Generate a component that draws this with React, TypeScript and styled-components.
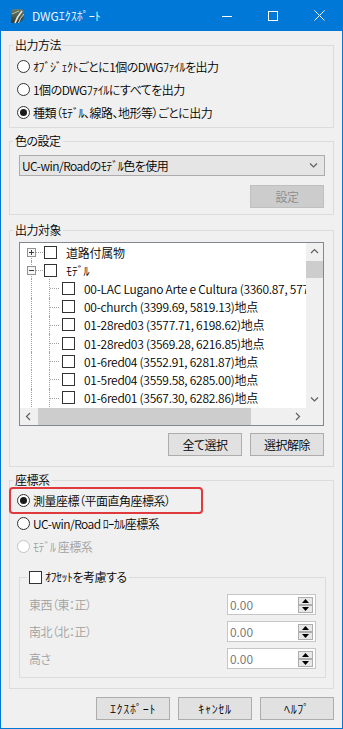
import React from 'react'
import styled, { createGlobalStyle } from 'styled-components'

const FONT = `"Noto Sans CJK JP", "Noto Sans", sans-serif`

const GlobalStyle = createGlobalStyle`
  html, body { margin: 0; padding: 0; background: #f0f0f0; }
  body {
    font-family: ${FONT};
    font-size: 12px;
    font-weight: 350;
    letter-spacing: -0.5px;
    color: #000;
    font-feature-settings: "palt";
  }
  * { box-sizing: border-box; }
`

const Window = styled.div`
  width: 343px;
  height: 729px;
  display: flex;
  flex-direction: column;
  background: #f0f0f0;
  border: 1px solid #0078d7;
  border-top: none;
`

const TitleBar = styled.div`
  display: flex;
  align-items: center;
  height: 31px;
  flex: none;
  background: #0078d7;
  color: #fff;
`

const IconSvg = styled.svg`
  margin-left: 8px;
  flex: none;
`

const Title = styled.span`
  margin-left: 6px;
  font-size: 12px;
  line-height: 16px;
  letter-spacing: 0;
`

const Captions = styled.div`
  display: flex;
  margin-left: auto;
  height: 100%;
`

const CaptionButton = styled.div`
  width: 46px;
  height: 100%;
  display: flex;
  align-items: center;
  justify-content: center;
`

const Body = styled.div`
  display: flex;
  flex-direction: column;
  padding: 7px 8px 0;
`

const Group = styled.fieldset<{ $top: number; $pad: string }>`
  margin: ${(p) => p.$top}px 0 0;
  padding: ${(p) => p.$pad};
  border: 1px solid #dcdcdc;
  min-inline-size: 0;
  display: flex;
  flex-direction: column;
`

const Legend = styled.legend`
  margin-left: -4px;
  padding: 0 2px;
  line-height: 14px;
  font-size: 12px;
`

const RadioRow = styled.div<{ $disabled?: boolean }>`
  display: flex;
  align-items: center;
  gap: 3px;
  height: 23px;
  color: ${(p) => (p.$disabled ? '#a0a0a0' : '#000')};
  white-space: nowrap;
`

const RadioDot = styled.span<{ $checked?: boolean; $disabled?: boolean }>`
  flex: none;
  width: 13px;
  height: 13px;
  border-radius: 50%;
  border: 1px solid ${(p) => (p.$disabled ? '#c4c4c4' : '#333')};
  background: #fff;
  display: flex;
  align-items: center;
  justify-content: center;
  &::after {
    content: '';
    width: 7px;
    height: 7px;
    border-radius: 50%;
    background: #1a1a1a;
    display: ${(p) => (p.$checked ? 'block' : 'none')};
  }
`

const Highlight = styled.div`
  display: flex;
  align-items: center;
  width: 194px;
  height: 27px;
  margin: -2px 0 -2px -8px;
  padding-left: 6px;
  border: 2px solid #e0393e;
  border-radius: 4px;
`

const Select = styled.div`
  display: flex;
  align-items: center;
  height: 21px;
  margin: 0 1px 0 2px;
  padding: 0 6px 0 2px;
  background: #e5e5e5;
  border: 1px solid #acacac;
  white-space: nowrap;
`

const SelectText = styled.span`
  flex: 1;
`

const ButtonRow = styled.div<{ $top: number }>`
  display: flex;
  justify-content: flex-end;
  gap: 8px;
  margin-top: ${(p) => p.$top}px;
  margin-right: 2px;
`

const Button = styled.div<{ $disabled?: boolean; $spacing?: number }>`
  width: 74px;
  height: 23px;
  display: flex;
  align-items: center;
  justify-content: center;
  letter-spacing: ${(p) => p.$spacing ?? -0.5}px;
  background: ${(p) => (p.$disabled ? '#cccccc' : '#e1e1e1')};
  border: 1px solid ${(p) => (p.$disabled ? '#bfbfbf' : '#adadad')};
  color: ${(p) => (p.$disabled ? '#8d8d8d' : '#000')};
`

const Tree = styled.div`
  height: 184px;
  margin: 0 2px;
  border: 1px solid #828790;
  background: #fff;
  display: grid;
  grid-template-columns: 1fr 17px;
  grid-template-rows: 1fr 17px;
`

const TreeView = styled.div`
  overflow: hidden;
  min-width: 0;
`

const TreeRow = styled.div`
  display: flex;
  align-items: center;
  height: 18.2px;
  white-space: nowrap;
`

const Guide = styled.span<{ $w: number; $x: number; $v: 'full' | 'down'; $h: number }>`
  position: relative;
  flex: none;
  width: ${(p) => p.$w}px;
  height: 100%;
  display: flex;
  align-items: center;
  &::before {
    content: '';
    position: absolute;
    left: ${(p) => p.$x}px;
    top: ${(p) => (p.$v === 'down' ? '50%' : '0')};
    bottom: 0;
    border-left: 1px dotted #a0a0a0;
  }
  &::after {
    content: '';
    position: absolute;
    left: ${(p) => p.$x + 1}px;
    top: 50%;
    width: ${(p) => p.$h}px;
    border-top: 1px dotted #a0a0a0;
  }
`

const Expander = styled.svg`
  position: relative;
  z-index: 1;
  margin-left: 7px;
  flex: none;
`

const Box = styled.span<{ $ml?: number }>`
  flex: none;
  width: 13px;
  height: 13px;
  margin-left: ${(p) => p.$ml ?? 0}px;
  border: 1px solid #333;
  background: #fff;
`

const TreeLabel = styled.span`
  margin-left: 9px;
  letter-spacing: -0.25px;
`

const VScroll = styled.div`
  display: flex;
  flex-direction: column;
  background: #f0f0f0;
`

const HScroll = styled.div`
  display: flex;
  background: #f0f0f0;
`

const Arrow = styled.div`
  flex: none;
  width: 17px;
  height: 17px;
  display: flex;
  align-items: center;
  justify-content: center;
`

const Thumb = styled.div<{ $vertical?: boolean }>`
  flex: none;
  background: #cdcdcd;
  ${(p) =>
    p.$vertical
      ? 'height: 17px; margin-top: 1px;'
      : 'width: 213px; margin-left: 1px;'}
`

const Fill = styled.div`
  flex: 1;
`

const Corner = styled.div`
  background: #f0f0f0;
`

const OffsetGroup = styled.fieldset`
  margin: 12px 0 0 2px;
  padding: 10px 9px 8px 9px;
  border: 1px solid #dcdcdc;
  min-inline-size: 0;
  display: flex;
  flex-direction: column;
  gap: 6px;
`

const CheckLegend = styled.legend`
  display: flex;
  align-items: center;
  gap: 3px;
  margin-left: -2px;
  padding: 0 2px;
  height: 14px;
  line-height: 14px;
`

const OffsetRow = styled.div`
  display: flex;
  align-items: center;
  justify-content: space-between;
  height: 21px;
  color: #a0a0a0;
`

const NumBox = styled.div`
  width: 89px;
  height: 21px;
  display: flex;
  align-items: center;
  padding: 0 2px;
  border: 1px solid #c6c6c6;
  background: #fff;
  color: #6d6d6d;
  letter-spacing: 0;
`

const Spin = styled.div`
  margin-left: auto;
  display: flex;
  flex-direction: column;
`

const SpinButton = styled.div`
  width: 15px;
  height: 8px;
  display: flex;
  align-items: center;
  justify-content: center;
  background: #e8e8e8;
  border: 1px solid #adadad;
`

const Footer = styled.div`
  display: flex;
  justify-content: flex-end;
  gap: 8px;
  margin-top: 8px;
`

const AppIcon = () => (
  <IconSvg width="17" height="16" viewBox="0 0 17 16">
    <defs>
      <linearGradient id="ig" x1="0" y1="0" x2="0" y2="1">
        <stop offset="0" stopColor="#6e7c6a" />
        <stop offset="1" stopColor="#2f3a31" />
      </linearGradient>
    </defs>
    <path d="M2 2 Q8 0 15 2 L15 10 Q12 15 6 15 L2 15 Z" fill="url(#ig)" />
    <path d="M6 15 Q8 9 13 3" stroke="#e8e8e8" strokeWidth="1.6" fill="none" />
    <path d="M9.5 15 Q11 10 15 6" stroke="#cfd8c8" strokeWidth="1" fill="none" />
    <path d="M3 6 L10 3" stroke="#a8c89a" strokeWidth="1" fill="none" />
  </IconSvg>
)

const Chevron = ({ dir }: { dir: 'up' | 'down' | 'left' | 'right' }) => {
  const d = {
    up: 'M1 5 L4.5 1.5 L8 5',
    down: 'M1 1.5 L4.5 5 L8 1.5',
    left: 'M5 1 L1.5 4.5 L5 8',
    right: 'M2 1 L5.5 4.5 L2 8',
  }[dir]
  const vert = dir === 'up' || dir === 'down'
  return (
    <svg width={vert ? 9 : 7} height={vert ? 7 : 9} viewBox={vert ? '0 0 9 7' : '0 0 7 9'}>
      <path d={d} stroke="#606060" strokeWidth="1.2" fill="none" />
    </svg>
  )
}

const ExpanderIcon = ({ open }: { open: boolean }) => (
  <Expander width="9" height="9" viewBox="0 0 9 9">
    <rect x="0.5" y="0.5" width="8" height="8" fill="#f6f6f6" stroke="#919191" />
    <path d="M2 4.5 H7" stroke="#2f3d5a" />
    {!open && <path d="M4.5 2 V7" stroke="#2f3d5a" />}
  </Expander>
)

const Radio = ({ label, checked, disabled }: { label: string; checked?: boolean; disabled?: boolean }) => (
  <RadioRow $disabled={disabled}>
    <RadioDot $checked={checked} $disabled={disabled} />
    <span>{label}</span>
  </RadioRow>
)

const SpinTriangle = ({ up }: { up: boolean }) => (
  <svg width="7" height="4" viewBox="0 0 7 4">
    <path d={up ? 'M0 4 L3.5 0 L7 4 Z' : 'M0 0 L3.5 4 L7 0 Z'} fill="#000" />
  </svg>
)

const children = [
  '00-LAC Lugano Arte e Cultura (3360.87, 5779.46)地点',
  '00-church (3399.69, 5819.13)地点',
  '01-28red03 (3577.71, 6198.62)地点',
  '01-28red03 (3569.28, 6216.85)地点',
  '01-6red04 (3552.91, 6281.87)地点',
  '01-5red04 (3559.58, 6285.00)地点',
  '01-6red01 (3567.30, 6282.86)地点',
]

const offsets = ['東西（東：正）', '南北（北：正）', '高さ']

export default function App() {
  return (
    <>
      <GlobalStyle />
      <Window>
        <TitleBar>
          <AppIcon />
          <Title>DWGｴｸｽﾎﾟｰﾄ</Title>
          <Captions>
            <CaptionButton>
              <svg width="10" height="10" viewBox="0 0 10 10">
                <path d="M0 5.5 H10" stroke="#fff" />
              </svg>
            </CaptionButton>
            <CaptionButton>
              <svg width="10" height="10" viewBox="0 0 10 10">
                <rect x="0.5" y="0.5" width="9" height="9" stroke="#fff" fill="none" />
              </svg>
            </CaptionButton>
            <CaptionButton>
              <svg width="11" height="11" viewBox="0 0 11 11">
                <path d="M0.5 0.5 L10.5 10.5 M10.5 0.5 L0.5 10.5" stroke="#fff" />
              </svg>
            </CaptionButton>
          </Captions>
        </TitleBar>

        <Body>
          <Group $top={0} $pad="3px 7px 3px">
            <Legend>出力方法</Legend>
            <Radio label="ｵﾌﾞｼﾞｪｸﾄごとに1個のDWGﾌｧｲﾙを出力" />
            <Radio label="1個のDWGﾌｧｲﾙにすべてを出力" />
            <Radio label="種類（ﾓﾃﾞﾙ、線路、地形等）ごとに出力" checked />
          </Group>

          <Group $top={6} $pad="7px 7px 6px">
            <Legend>色の設定</Legend>
            <Select>
              <SelectText>UC-win/Roadのﾓﾃﾞﾙ色を使用</SelectText>
              <Chevron dir="down" />
            </Select>
            <ButtonRow $top={9}>
              <Button $disabled>設定</Button>
            </ButtonRow>
          </Group>

          <Group $top={8} $pad="5px 7px 10px">
            <Legend>出力対象</Legend>
            <Tree>
              <TreeView>
                <TreeRow>
                  <Guide $w={23} $x={11} $v="down" $h={11}>
                    <ExpanderIcon open={false} />
                  </Guide>
                  <Box $ml={1} />
                  <TreeLabel>道路付属物</TreeLabel>
                </TreeRow>
                <TreeRow>
                  <Guide $w={23} $x={11} $v="full" $h={11}>
                    <ExpanderIcon open />
                  </Guide>
                  <Box $ml={1} />
                  <TreeLabel>ﾓﾃﾞﾙ</TreeLabel>
                </TreeRow>
                {children.map((c, i) => (
                  <TreeRow key={i}>
                    <Guide $w={23} $x={11} $v="full" $h={0} />
                    <Guide $w={19} $x={6} $v="full" $h={9} />
                    <Box />
                    <TreeLabel>{c}</TreeLabel>
                  </TreeRow>
                ))}
              </TreeView>
              <VScroll>
                <Arrow>
                  <Chevron dir="up" />
                </Arrow>
                <Thumb $vertical />
                <Fill />
                <Arrow>
                  <Chevron dir="down" />
                </Arrow>
              </VScroll>
              <HScroll>
                <Arrow>
                  <Chevron dir="left" />
                </Arrow>
                <Thumb />
                <Fill />
                <Arrow>
                  <Chevron dir="right" />
                </Arrow>
              </HScroll>
              <Corner />
            </Tree>
            <ButtonRow $top={7}>
              <Button>全て選択</Button>
              <Button>選択解除</Button>
            </ButtonRow>
          </Group>

          <Group $top={6} $pad="2px 7px 10px">
            <Legend>座標系</Legend>
            <Highlight>
              <Radio label="測量座標（平面直角座標系）" checked />
            </Highlight>
            <Radio label="UC-win/Road ﾛｰｶﾙ座標系" />
            <Radio label="ﾓﾃﾞﾙ 座標系" disabled />
            <OffsetGroup>
              <CheckLegend>
                <Box />
                <span>ｵﾌｾｯﾄを考慮する</span>
              </CheckLegend>
              {offsets.map((o) => (
                <OffsetRow key={o}>
                  <span>{o}</span>
                  <NumBox>
                    <span>0.00</span>
                    <Spin>
                      <SpinButton>
                        <SpinTriangle up />
                      </SpinButton>
                      <SpinButton>
                        <SpinTriangle up={false} />
                      </SpinButton>
                    </Spin>
                  </NumBox>
                </OffsetRow>
              ))}
            </OffsetGroup>
          </Group>

          <Footer>
            <Button $spacing={0.7}>ｴｸｽﾎﾟｰﾄ</Button>
            <Button $spacing={0.7}>ｷｬﾝｾﾙ</Button>
            <Button $spacing={0.7}>ﾍﾙﾌﾟ</Button>
          </Footer>
        </Body>
      </Window>
    </>
  )
}
